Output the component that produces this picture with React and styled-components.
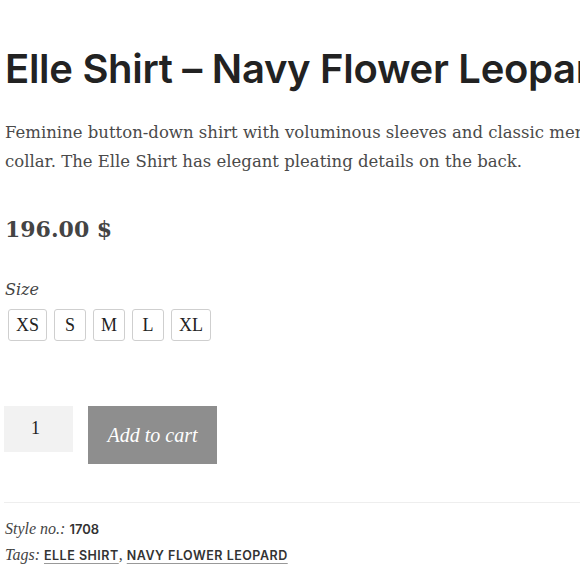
import React from 'react'
import styled, { createGlobalStyle } from 'styled-components'

const GlobalStyle = createGlobalStyle`
  html, body {
    margin: 0;
    padding: 0;
    background: #fff;
    overflow: hidden;
  }
  body {
    font-family: 'DejaVu Serif', serif;
    color: #3a3a3a;
  }
`

const Product = styled.section`
  width: 640px;
  padding: 0 0 0 5px;
`

const Title = styled.h1`
  margin: 0;
  padding-top: 43px;
  font-family: Inter, 'Open Sans', sans-serif;
  font-weight: 600;
  font-size: 40px;
  line-height: 52px;
  color: #222;
  white-space: nowrap;
  letter-spacing: -0.3px;
`

const Description = styled.p`
  margin: 23px 0 0;
  font-size: 16.5px;
  line-height: 29px;
  color: #4a4a4a;
  width: 625px;
`

const Price = styled.div`
  margin-top: 38px;
  font-weight: 700;
  font-size: 22px;
  line-height: 30px;
  color: #444;
`

const SizeLabel = styled.div`
  margin-top: 35px;
  font-style: italic;
  font-size: 16px;
  line-height: 22px;
  color: #444;
`

const Sizes = styled.div`
  display: flex;
  gap: 7px;
  margin: 8px 0 0 3px;
`

const SizeButton = styled.button`
  min-width: 32px;
  height: 32px;
  padding: 0 7px;
  box-sizing: border-box;
  border: 1px solid #cfcfcf;
  border-radius: 3px;
  background: #fff;
  font-family: 'Liberation Serif', serif;
  font-size: 18px;
  color: #222;
`

const CartRow = styled.div`
  display: flex;
  align-items: flex-start;
  gap: 15px;
  margin: 65px 0 0 -1px;
`

const Quantity = styled.div`
  width: 69px;
  height: 46px;
  box-sizing: border-box;
  padding: 12px 0 0 27px;
  background: #f2f2f2;
  font-family: 'Liberation Serif', serif;
  font-size: 18px;
  color: #222;
`

const CartButton = styled.button`
  width: 129px;
  height: 58px;
  border: none;
  background: #8e8e8e;
  color: #fff;
  font-family: 'Liberation Serif', serif;
  font-style: italic;
  font-size: 20px;
`

const Divider = styled.hr`
  margin: 38px 0 0 -1px;
  border: none;
  border-top: 1px solid #eeeeee;
`

const Meta = styled.div`
  margin-top: 13px;
  font-family: 'Liberation Serif', serif;
  font-size: 16px;
  line-height: 25px;
  color: #444;
`

const MetaLabel = styled.span`
  font-style: italic;
`

const MetaValue = styled.span`
  font-family: Inter, 'Open Sans', sans-serif;
  font-weight: 600;
  font-size: 13px;
  color: #333;
`

const Tag = styled.a`
  font-family: Inter, 'Open Sans', sans-serif;
  font-weight: 600;
  font-size: 12.5px;
  letter-spacing: 0.5px;
  color: #333;
  text-decoration: underline;
  text-decoration-color: #999;
  text-underline-offset: 3px;
`

const sizes = ['XS', 'S', 'M', 'L', 'XL']

export default function App() {
  return (
    <>
      <GlobalStyle />
      <Product>
        <Title>Elle Shirt – Navy Flower Leopard</Title>
        <Description>
          Feminine button-down shirt with voluminous sleeves and classic men's
          collar. The Elle Shirt has elegant pleating details on the back.
        </Description>
        <Price>196.00 $</Price>
        <SizeLabel>Size</SizeLabel>
        <Sizes>
          {sizes.map((s) => (
            <SizeButton key={s}>{s}</SizeButton>
          ))}
        </Sizes>
        <CartRow>
          <Quantity>1</Quantity>
          <CartButton>Add to cart</CartButton>
        </CartRow>
        <Divider />
        <Meta>
          <div>
            <MetaLabel>Style no.:</MetaLabel> <MetaValue>1708</MetaValue>
          </div>
          <div>
            <MetaLabel>Tags:</MetaLabel> <Tag>ELLE SHIRT</Tag>,{' '}
            <Tag>NAVY FLOWER LEOPARD</Tag>
          </div>
        </Meta>
      </Product>
    </>
  )
}
